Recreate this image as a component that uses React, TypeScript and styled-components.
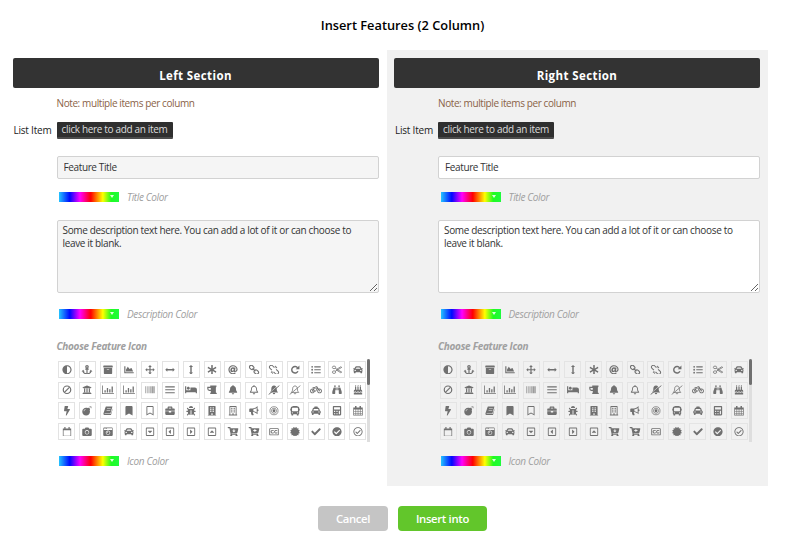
import React from "react";
import styled, { createGlobalStyle } from "styled-components";
import {
  FaAdjust, FaAnchor, FaArchive, FaChartArea, FaAsterisk, FaAt, FaListUl,
  FaCar, FaUniversity, FaBarcode, FaBed, FaBell, FaRegBell,
  FaBicycle, FaBinoculars, FaBirthdayCake, FaBolt, FaBomb, FaBookmark, FaRegBookmark, FaBriefcase,
  FaBug, FaBuilding, FaRegBuilding, FaBus, FaTaxi, FaCalculator, FaCamera,
  FaCameraRetro, FaRegCaretSquareDown, FaRegCaretSquareLeft, FaRegCaretSquareRight, FaRegCaretSquareUp,
  FaCartArrowDown, FaCartPlus, FaRegClosedCaptioning, FaCertificate, FaCheck, FaCheckCircle, FaRegCheckCircle,
} from "react-icons/fa";

const Global = createGlobalStyle`
  *, *::before, *::after { box-sizing: border-box; }
  body { margin: 0; background: #fff; font-family: "Open Sans", sans-serif; }
`;

const Page = styled.main`
  width: 800px;
  height: 539px;
  overflow: hidden;
  display: flex;
  flex-direction: column;
`;

const Title = styled.h1`
  margin: 0;
  height: 50px;
  padding-left: 5px;
  text-align: center;
  font-size: 12.8px;
  line-height: 51px;
  font-weight: 600;
  color: #000;
`;

const Columns = styled.div`
  display: grid;
  grid-template-columns: 381.5px 381.5px;
  padding-left: 5px;
  height: 436px;
`;

const Panel = styled.section<{ $shaded?: boolean }>`
  padding: 8px 8px 0 7.5px;
  background: ${(p) => (p.$shaded ? "#f1f1f1" : "#fff")};
  --field: ${(p) => (p.$shaded ? "#fff" : "#f5f5f5")};
  --tile: ${(p) => (p.$shaded ? "#e4e4e4" : "#e3e3e3")};
`;

const PanelHeader = styled.h2`
  margin: 0;
  height: 30px;
  border-radius: 2px;
  background: #333;
  color: #fff;
  text-align: center;
  font-size: 11.5px;
  font-weight: 700;
  letter-spacing: 0.4px;
  line-height: 35px;
`;

const Body = styled.div`
  padding-left: 44px;
`;

const Note = styled.p`
  margin: 0;
  height: 30px;
  line-height: 30px;
  font-size: 10px;
  letter-spacing: -0.4px;
  color: #8a6247;
`;

const ListRow = styled.div`
  display: flex;
  align-items: center;
  height: 24px;
  margin-bottom: 14px;
  margin-left: -43px;
`;

const ListLabel = styled.span`
  flex: none;
  width: 43px;
  font-size: 10px;
  letter-spacing: -0.22px;
  color: #222;
`;

const AddButton = styled.button`
  width: 116px;
  height: 17px;
  padding: 0 0 1px;
  border: 0;
  border-bottom: 2px solid #4c4c4c;
  border-radius: 1px;
  background: #2f2f2f;
  color: #dedede;
  font: 10px/14px "Open Sans", sans-serif;
  letter-spacing: -0.34px;
  white-space: nowrap;
`;

const TextInput = styled.input`
  display: block;
  width: 322px;
  height: 23px;
  padding: 0 6px 1px;
  border: 1px solid #d2d2d2;
  border-radius: 2px;
  background: var(--field);
  color: #333;
  font: 10px "Open Sans", sans-serif;
  letter-spacing: -0.38px;
`;

const TextBox = styled.textarea`
  display: block;
  width: 322px;
  height: 73px;
  padding: 3px 5px;
  border: 1px solid #d2d2d2;
  border-radius: 2px;
  background: var(--field);
  color: #333;
  font: 10px/13px "Open Sans", sans-serif;
  letter-spacing: -0.34px;
  resize: both;
`;

const ColorRow = styled.label<{ $height: number }>`
  display: flex;
  align-items: center;
  gap: 8px;
  height: ${(p) => p.$height}px;
  padding-left: 2.5px;
  font-size: 10px;
  letter-spacing: -0.36px;
  font-style: italic;
  color: #a0a0a0;
`;

const Swatch = styled.span`
  display: flex;
  align-items: center;
  justify-content: flex-end;
  width: 60px;
  height: 10px;
  padding: 0 5px 1px 0;
  background: linear-gradient(90deg, #24c4ff 0%, #0008ff 18%, #f0f 35%, #f00 53%, #ff0 73%, #1ffb22 87%, #1ffb3c 100%);
`;

const Spacer = styled.div`
  height: 5px;
`;

const IconHeading = styled.h3`
  margin: 0 0 2px;
  height: 22px;
  line-height: 22px;
  font-size: 10px;
  letter-spacing: -0.3px;
  font-style: italic;
  font-weight: 700;
  color: #a0a0a0;
`;

const Picker = styled.div`
  display: flex;
  justify-content: space-between;
  width: 313.5px;
  height: 83px;
  overflow: hidden;
`;

const Tiles = styled.div`
  display: grid;
  grid-template-columns: repeat(15, 17px);
  grid-auto-rows: 17px;
  column-gap: 3.8px;
  row-gap: 3.7px;
  padding: 2px 0 0 1.5px;
`;

const Tile = styled.span`
  display: flex;
  align-items: center;
  justify-content: center;
  border: 1px solid var(--tile);
  color: #707070;
  svg { width: 12px; height: 9.5px; flex: none; }
`;

const ScrollTrack = styled.div`
  width: 3px;
  height: 83px;
  background: #dedede;
`;

const ScrollThumb = styled.div`
  height: 26px;
  border-radius: 2px;
  background: #707070;
`;

const Actions = styled.footer`
  display: flex;
  justify-content: center;
  gap: 10px;
  padding: 20px 0 0 5px;
`;

const ActionButton = styled.button<{ $primary?: boolean }>`
  width: ${(p) => (p.$primary ? 89 : 70)}px;
  height: 25px;
  padding: 0;
  border: 0;
  border-radius: 4px;
  background: ${(p) => (p.$primary ? "#62c62b" : "#c5c5c5")};
  color: #fff;
  font: 600 11.3px "Open Sans", sans-serif;
  letter-spacing: -0.32px;
`;

const glyph = (children: React.ReactNode) => () => (
  <svg viewBox="0 0 16 16" fill="currentColor" stroke="none">{children}</svg>
);

const Arrows = glyph(
  <path d="M8 0l3 3.200H9V7h3.800V5L16 8l-3.200 3V9H9v3.800h2L8 16l-3-3.200h2V9H3.200v2L0 8l3.200-3v2H7V3.200H5z" />
);
const ArrowsH = glyph(<path d="M0 8l3.500-3.500v2.300h9V4.500L16 8l-3.500 3.500V9.200h-9v2.300z" />);
const ArrowsV = glyph(<path d="M8 0l3.500 3.500H9.200v9h2.300L8 16l-3.500-3.500h2.300v-9H4.500z" />);
const Bars = glyph(<path d="M0 2h16v2H0zM0 7h16v2H0zM0 12h16v2H0z" />);
const BarChart = () => (
  <svg viewBox="0 0 20 16" fill="currentColor">
    <path d="M0 1h1.300v12.700H20V15H0zM4 9h2.200v3.800H4zM8 5h2.200v7.800H8zM12 7h2.200v5.800H12zM16 2.500h2.200v10.300H16z" />
  </svg>
);
const Ban = glyph(
  <g fill="none" stroke="currentColor" strokeWidth="2">
    <circle cx="8" cy="8" r="6.300" />
    <path d="M12.400 3.600l-8.800 8.800" />
  </g>
);
const Repeat = glyph(
  <>
    <path d="M12.500 4.800A5.500 5.500 0 1 0 13 10.500" fill="none" stroke="currentColor" strokeWidth="2.400" />
    <path d="M15.500 1v6.300H9.200z" />
  </>
);
const Chain = glyph(
  <g transform="rotate(45 8 8)" fill="none" stroke="currentColor" strokeWidth="1.900">
    <rect x="-1.500" y="5" width="8" height="6" rx="3" />
    <rect x="9.500" y="5" width="8" height="6" rx="3" />
    <path d="M4.500 8h7" />
  </g>
);
const ChainBroken = glyph(
  <g transform="rotate(45 8 8)" fill="none" stroke="currentColor" strokeWidth="1.700">
    <path d="M6 5H1.500a3 3 0 0 0 0 6H6M10 5h4.500a3 3 0 0 1 0 6H10M8 1v3M8 12v3M5.300 1.500l.8 2M10.700 14.500l-.8-2" />
  </g>
);
const Mug = glyph(
  <path fillRule="evenodd" d="M5 1h10.500v2l-1 1v8.500l1.500 1V15H5v-1.500l1-1V10H3.500A3.500 3.500 0 0 1 0 6.500V3h5zM2 5v1.500A1.500 1.500 0 0 0 3.500 8H6V5z" />
);
const BellSlash = glyph(
  <>
    <path d="M8 1c3 .4 4.500 2.500 4.500 5 0 4 1 5 2.500 6.500H1C2.500 11 3.500 10 3.500 6 3.500 3.500 5 1.400 8 1zM6 13.500h4a2 2 0 0 1-4 0z" />
    <path d="M-.5 14.200L15.500 .2" stroke="#f8f8f8" strokeWidth="1" />
    <path d="M-1 16L17 1" stroke="currentColor" strokeWidth="1.600" />
  </>
);
const BellSlashOpen = glyph(
  <g fill="none" stroke="currentColor" strokeWidth="1.300">
    <path d="M8 1.500c3 .4 4 2.500 4 5 0 3.500 1 4.500 2.300 6H1.700C3 11 4 10 4 6.500c0-2.500 1-4.600 4-5zM6.500 13.500a1.500 1.500 0 0 0 3 0M-1 16L17 1" />
  </g>
);
const Book = glyph(
  <path fillRule="evenodd" d="M5 1h10.500L12 12.500H2.800c-.8 0-.8 1 0 1h9.700L15.800 4v1.500L13 15H2C0 15 0 13 .7 11.500L3.500 3C4 1.500 4.300 1 5 1zm1.500 3l-.3 1h6.300l.3-1zm-.8 2.700l-.3 1h6.300l.3-1z" />
);
const Bullhorn = glyph(
  <path fillRule="evenodd" d="M14 0v5.300a1.700 1.700 0 0 1 0 3.400V14c-2.500-2.200-5-3.400-7.500-3.700-.8.700-.5 1.700.3 2.300-.5.900.2 1.600 1 2.300-1 1.200-3.500 1.100-4 0C3.300 13.300 2.600 12 3 10.200H1.500A1.500 1.500 0 0 1 0 8.700V5.500A1.500 1.500 0 0 1 1.500 4H6c3 0 5.500-1.500 8-4zm-1.500 3.200C10.800 4.500 9 5.300 7 5.500v3.300c2 .2 3.800 1 5.500 2.200z" />
);
const Bullseye = glyph(
  <>
    <g fill="none" stroke="currentColor" strokeWidth="1.200">
      <circle cx="8" cy="8" r="6.800" />
      <circle cx="8" cy="8" r="4.300" />
    </g>
    <circle cx="8" cy="8" r="2.400" />
  </>
);
const Calendar = glyph(
  <path fillRule="evenodd" d="M0 2.500h3V0h2.500v2.500h5V0H13v2.500h3V16H0zM1.200 6v2.300h2.600V6zm3.700 0v2.300h2.600V6zm3.700 0v2.300h2.600V6zm3.700 0v2.300h2.500V6zM1.200 9.300v2.300h2.600V9.300zm3.700 0v2.300h2.600V9.300zm3.700 0v2.300h2.600V9.300zm3.700 0v2.300h2.500V9.300zM1.200 12.600v2.300h2.600v-2.300zm3.700 0v2.300h2.600v-2.300zm3.700 0v2.300h2.600v-2.300zm3.700 0v2.300h2.500v-2.300z" />
);
const CalendarOpen = glyph(
  <path fillRule="evenodd" d="M1 2.500h2.500V0h2v2.500h5V0h2v2.500H15V16H1zM2.200 5.300v9.500h11.600V5.300z" />
);
const Scissors = glyph(
  <g fill="none" stroke="currentColor" strokeWidth="1.300">
    <ellipse cx="3" cy="4" rx="2.800" ry="2.200" />
    <ellipse cx="3" cy="12" rx="2.800" ry="2.200" />
    <path d="M5 5.500L16 12l-1.700 1L7 8.500M5 10.500L16 4l-1.700-1L7 7.500" />
  </g>
);

const icons: React.ElementType[] = [
  FaAdjust, FaAnchor, FaArchive, FaChartArea, Arrows, ArrowsH, ArrowsV, FaAsterisk, FaAt, Chain, ChainBroken,
  Repeat, FaListUl, Scissors, FaCar,
  Ban, FaUniversity, BarChart, BarChart, FaBarcode, Bars, FaBed, Mug, FaBell, FaRegBell, BellSlash,
  BellSlashOpen, FaBicycle, FaBinoculars, FaBirthdayCake,
  FaBolt, FaBomb, Book, FaBookmark, FaRegBookmark, FaBriefcase, FaBug, FaBuilding, FaRegBuilding, Bullhorn,
  Bullseye, FaBus, FaTaxi, FaCalculator, Calendar,
  CalendarOpen, FaCamera, FaCameraRetro, FaCar, FaRegCaretSquareDown, FaRegCaretSquareLeft,
  FaRegCaretSquareRight, FaRegCaretSquareUp, FaCartArrowDown, FaCartPlus, FaRegClosedCaptioning, FaCertificate,
  FaCheck, FaCheckCircle, FaRegCheckCircle,
];

function ColorField({ label, height }: { label: string; height: number }) {
  return (
    <ColorRow $height={height}>
      <Swatch>
        <svg width="4" height="3" viewBox="0 0 4 3"><path d="M0 0h4L2 3z" fill="#dfffdc" /></svg>
      </Swatch>
      {label}
    </ColorRow>
  );
}

function Section({ name, shaded }: { name: string; shaded?: boolean }) {
  return (
    <Panel $shaded={shaded}>
      <PanelHeader>{name}</PanelHeader>
      <Body>
        <Note>Note: multiple items per column</Note>
        <ListRow>
          <ListLabel>List Item</ListLabel>
          <AddButton>click here to add an item</AddButton>
        </ListRow>
        <TextInput defaultValue="Feature Title" />
        <ColorField label="Title Color" height={36} />
        <Spacer />
        <TextBox defaultValue="Some description text here. You can add a lot of it or can choose to leave it blank." />
        <ColorField label="Description Color" height={42} />
        <IconHeading>Choose Feature Icon</IconHeading>
        <Picker>
          <Tiles>
            {icons.map((Icon, i) => (
              <Tile key={i}><Icon /></Tile>
            ))}
          </Tiles>
          <ScrollTrack><ScrollThumb /></ScrollTrack>
        </Picker>
        <ColorField label="Icon Color" height={38} />
      </Body>
    </Panel>
  );
}

export default function App() {
  return (
    <Page>
      <Global />
      <Title>Insert Features (2 Column)</Title>
      <Columns>
        <Section name="Left Section" />
        <Section name="Right Section" shaded />
      </Columns>
      <Actions>
        <ActionButton>Cancel</ActionButton>
        <ActionButton $primary>Insert into</ActionButton>
      </Actions>
    </Page>
  );
}
